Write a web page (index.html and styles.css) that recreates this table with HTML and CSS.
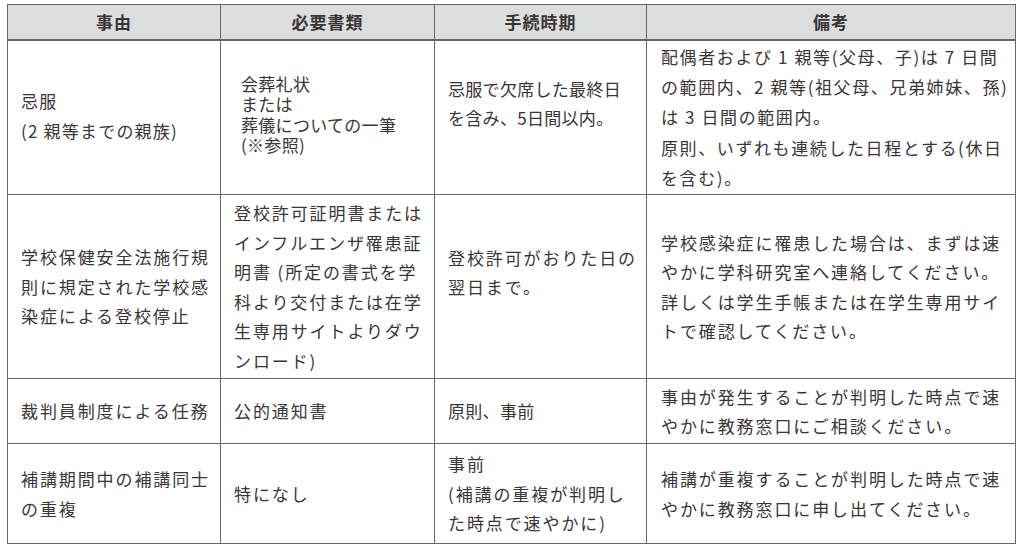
FILE: index.html
```html
<!DOCTYPE html>
<html lang="ja">
<head>
<meta charset="utf-8">
<title>忌引等の届出</title>
<link rel="stylesheet" href="styles.css">
</head>
<body>
<table class="rules">
  <colgroup>
    <col class="c1">
    <col class="c2">
    <col class="c3">
    <col class="c4">
  </colgroup>
  <thead>
    <tr class="head">
      <th>事由</th>
      <th>必要書類</th>
      <th>手続時期</th>
      <th>備考</th>
    </tr>
  </thead>
  <tbody>
    <tr class="r1">
      <td class="kin"><div class="up4">忌服<br>(2 親等までの親族)</div></td>
      <td class="tight docs"><div class="up6">会葬礼状<br>または<br>葬儀についての一筆<br>(※参照)</div></td>
      <td class="tight"><div class="lift">忌服で欠席した最終日<br>を含み、5日間以内。</div></td>
      <td class="note1">配偶者および 1 親等(父母、子)は 7 日間<br>の範囲内、2 親等(祖父母、兄弟姉妹、孫)<br>は 3 日間の範囲内。<br>原則、いずれも連続した日程とする(休日<br>を含む)。</td>
    </tr>
    <tr class="r2">
      <td>学校保健安全法施行規<br>則に規定された学校感<br>染症による登校停止</td>
      <td>登校許可証明書または<br>インフルエンザ罹患証<br>明書 (所定の書式を学<br>科より交付または在学<br>生専用サイトよりダウ<br>ンロード)</td>
      <td><div class="lift">登校許可がおりた日の<br>翌日まで。</div></td>
      <td>学校感染症に罹患した場合は、まずは速<br>やかに学科研究室へ連絡してください。<br>詳しくは学生手帳または在学生専用サイ<br>トで確認してください。</td>
    </tr>
    <tr class="r3">
      <td>裁判員制度による任務</td>
      <td>公的通知書</td>
      <td class="tight">原則、事前</td>
      <td>事由が発生することが判明した時点で速<br>やかに教務窓口にご相談ください。</td>
    </tr>
    <tr class="r4">
      <td>補講期間中の補講同士<br>の重複</td>
      <td>特になし</td>
      <td>事前<br>(補講の重複が判明し<br>た時点で速やかに)</td>
      <td>補講が重複することが判明した時点で速<br>やかに教務窓口に申し出てください。</td>
    </tr>
  </tbody>
</table>
</body>
</html>
```

FILE: styles.css
```css
html, body {
  margin: 0;
  background: #ffffff;
}

body {
  padding: 4px 0 0 7px;
  font-family: "Noto Sans CJK JP", "Noto Sans", sans-serif;
  color: #3a3536;
}

.rules {
  border-collapse: collapse;
  table-layout: fixed;
  width: 1008px;
  font-size: 17px;
}

.c1 { width: 213px; }
.c2 { width: 214px; }
.c3 { width: 212px; }
.c4 { width: 369px; }

.rules th,
.rules td {
  border: 1px solid #6b6767;
  vertical-align: middle;
  white-space: nowrap;
  overflow: hidden;
}

.rules th {
  background: #dcdddd;
  font-weight: 700;
  font-size: 17px;
  letter-spacing: 1px;
  text-align: center;
  height: 34px;
  padding: 0;
  line-height: 20px;
  border-bottom-width: 2px;
}

.rules td {
  padding: 0 0 0 13px;
  line-height: 29.5px;
  letter-spacing: 1.9px;
  text-align: left;
}

.rules td:last-child {
  padding-left: 14px;
}

.r1 td { height: 153px; }
.r2 td { height: 183px; }
.r3 td { height: 64px; }
.r4 td { height: 99px; }

.rules td.tight {
  letter-spacing: 0.3px;
}

.rules td.kin {
  letter-spacing: 1.2px;
}

.rules td.docs {
  padding-left: 20px;
  line-height: 20.3px;
}

.up4 {
  padding-bottom: 4px;
}

.up6 {
  padding-bottom: 6px;
}

.lift {
  padding-bottom: 29px;
}

.rules td.note1 {
  letter-spacing: 1.6px;
  line-height: 30.2px;
}
```
